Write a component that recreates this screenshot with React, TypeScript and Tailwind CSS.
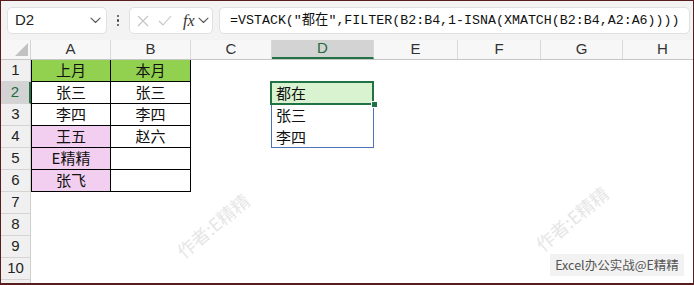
const COLS = [
  { label: 'A', w: 'w-[80px]' },
  { label: 'B', w: 'w-[80px]' },
  { label: 'C', w: 'w-[81px]' },
  { label: 'D', w: 'w-[102px]' },
  { label: 'E', w: 'w-[84px]' },
  { label: 'F', w: 'w-[83px]' },
  { label: 'G', w: 'w-[82px]' },
  { label: 'H', w: 'w-[80px]' },
];

const TABLE: Record<number, [string, string]> = {
  1: ['上月', '本月'],
  2: ['张三', '张三'],
  3: ['李四', '李四'],
  4: ['王五', '赵六'],
  5: ['E精精', ''],
  6: ['张飞', ''],
};

const SPILL: Record<number, string> = {
  2: '都在',
  3: '张三',
  4: '李四',
};

const ROWS = [1, 2, 3, 4, 5, 6, 7, 8, 9, 10, 11];

const CJK = "font-['DengXian','Noto_Sans_CJK_SC',sans-serif]";

const Chevron = ({ className }: { className?: string }) => (
  <svg className={className} width="11" height="7" viewBox="0 0 11 7" fill="none">
    <path d="M1 1.2l4.5 4.3L10 1.2" stroke="#555" strokeWidth="1.1" strokeLinecap="round" strokeLinejoin="round" />
  </svg>
);

const FormulaBar = () => (
  <div className="flex h-[39px] shrink-0 items-start bg-[#f3f3f3] pt-[6px] pl-[6px] pr-[3px]">
    <div className="flex h-[27px] w-[100px] items-center justify-between rounded-[5px] border border-[#e1e1e1] bg-white pl-[7px] pr-[5px]">
      <span className="font-['Liberation_Sans',sans-serif] text-[15px] text-[#222]">D2</span>
      <Chevron />
    </div>
    <div className="flex h-[27px] w-[22px] flex-col items-center justify-center gap-[2px]">
      <span className="h-[2.5px] w-[2.5px] rounded-full bg-[#444]" />
      <span className="h-[2.5px] w-[2.5px] rounded-full bg-[#444]" />
      <span className="h-[2.5px] w-[2.5px] rounded-full bg-[#444]" />
    </div>
    <div className="flex h-[27px] w-[84px] items-center rounded-[5px] border border-[#e1e1e1] bg-white pl-[6px]">
      <svg width="12" height="12" viewBox="0 0 12 12" fill="none" className="ml-[1px]">
        <path d="M1 1l10 10M11 1L1 11" stroke="#c4c4c4" strokeWidth="1.1" />
      </svg>
      <svg width="14" height="11" viewBox="0 0 14 11" fill="none" className="ml-[9px]">
        <path d="M1 6l4 4L13 1" stroke="#c4c4c4" strokeWidth="1.1" />
      </svg>
      <span className="ml-[11px] font-['Liberation_Serif',serif] text-[16px] italic leading-none text-[#333]">fx</span>
      <Chevron className="ml-[3px]" />
    </div>
    <div className="ml-[6px] flex h-[27px] flex-1 items-center rounded-[5px] border border-[#e1e1e1] bg-white pl-[10px]">
      <span className="whitespace-pre font-['Liberation_Mono','Noto_Sans_CJK_SC',monospace] text-[13.3px] text-[#111]">
        =VSTACK("都在",FILTER(B2:B4,1-ISNA(XMATCH(B2:B4,A2:A6))))
      </span>
    </div>
  </div>
);

const ColumnHeaders = () => (
  <div className="flex h-[20px] shrink-0 border-b border-[#c6c6c6] bg-[#f7f7f7]">
    <div className="relative w-[30px] shrink-0 border-r border-[#d4d4d4]">
      <div className="absolute right-[2px] bottom-[3px] h-0 w-0 border-b-[13px] border-l-[13px] border-b-[#c2c2c2] border-l-transparent" />
    </div>
    {COLS.map((c) => {
      const sel = c.label === 'D';
      return (
        <div
          key={c.label}
          className={`${c.w} flex shrink-0 items-center justify-center border-r border-[#d8d8d8] font-['Liberation_Sans',sans-serif] text-[15px] ${
            sel ? 'border-b-2 border-b-[#217346] bg-[#d3d3d3] text-[#1e6b3f]' : 'text-[#333]'
          }`}
        >
          {c.label}
        </div>
      );
    })}
  </div>
);

const Row = ({ r }: { r: number }) => {
  const sel = r === 2;
  const inTable = r <= 6;
  const pink = r >= 4 && r <= 6;
  const head = r === 1;
  const vals = TABLE[r];
  return (
    <div className="flex h-[22px] shrink-0">
      <div
        className={`flex w-[30px] shrink-0 items-center justify-center border-b border-[#d4d4d4] font-['Liberation_Sans',sans-serif] text-[15px] ${
          sel ? 'border-r-2 border-r-[#217346] bg-[#d3d3d3] text-[#1e6b3f]' : 'border-r border-r-[#cfcfcf] bg-[#f0f0f0] text-[#222]'
        }`}
      >
        {r <= 10 ? r : ''}
      </div>
      {COLS.map((c) => {
        if ((c.label === 'A' || c.label === 'B') && inTable) {
          const isA = c.label === 'A';
          const bg = head ? 'bg-[#92d050]' : isA && pink ? 'bg-[#f2cff0]' : 'bg-white';
          return (
            <div
              key={c.label}
              className={`${c.w} ${bg} ${isA ? 'border-l' : ''} flex shrink-0 items-center justify-center border-r border-b border-black ${CJK} text-[15px] text-[#111]`}
            >
              {isA ? vals[0] : vals[1]}
            </div>
          );
        }
        if (c.label === 'D' && SPILL[r]) {
          return (
            <div
              key={c.label}
              className={`${c.w} relative flex shrink-0 items-center pl-[4px] ${CJK} text-[15px] text-[#111] ${sel ? 'bg-[#d9f2d0]' : ''}`}
            >
              {SPILL[r]}
              {sel && (
                <>
                  <div className="pointer-events-none absolute top-0 left-[-1px] h-[66px] w-[103px] border border-[#4a73b8]" />
                  <div className="pointer-events-none absolute top-[-1px] left-[-2px] h-[24px] w-[104px] border-2 border-[#217346]" />
                  <div className="absolute right-[-4px] bottom-[-4px] h-[7px] w-[7px] border border-white bg-[#217346]" />
                </>
              )}
            </div>
          );
        }
        return <div key={c.label} className={`${c.w} shrink-0`} />;
      })}
    </div>
  );
};

export default function App() {
  return (
    <div className="relative flex h-[285px] w-[694px] flex-col overflow-hidden border border-b-2 border-[#5a1d1d] bg-white">
      <FormulaBar />
      <ColumnHeaders />
      {ROWS.map((r) => (
        <Row key={r} r={r} />
      ))}

      <div className={`pointer-events-none absolute top-[211px] left-[168px] -rotate-[40deg] whitespace-nowrap ${CJK} text-[18px] text-[#e6e6e6]`}>
        作者:E精精
      </div>
      <div className={`pointer-events-none absolute top-[204px] left-[527px] -rotate-[40deg] whitespace-nowrap ${CJK} text-[18px] text-[#e6e6e6]`}>
        作者:E精精
      </div>

      <div className={`absolute top-[253px] left-[549px] flex h-[22px] w-[134px] items-center justify-center bg-[#f2f2f2] ${CJK} text-[12.5px] text-[#555]`}>
        Excel办公实战@E精精
      </div>
    </div>
  );
}
